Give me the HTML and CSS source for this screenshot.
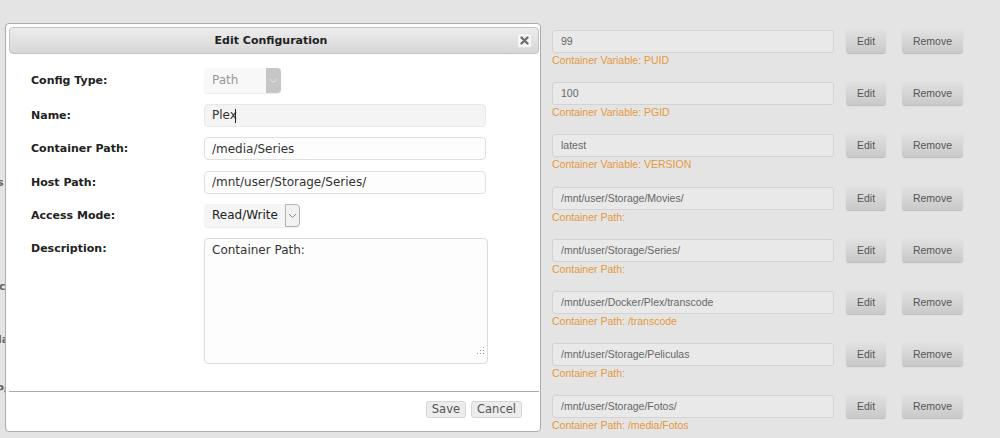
FILE: index.html
```html
<!DOCTYPE html>
<html lang="en">
<head>
    <meta charset="UTF-8">
    <meta name="viewport" content="width=device-width, initial-scale=1.0">
    <title>Edit Configuration</title>
    <link rel="stylesheet" href="styles.css">
</head>
<body>
    <!-- Page behind the dialog -->
    <div class="page">
        <div class="side">
            <span class="side-label side-s">s</span>
            <span class="side-label side-c">c</span>
            <span class="side-label side-la">la</span>
            <span class="side-label side-pa">Pa</span>
        </div>

        <div class="config-list">
            <div class="cfg-row">
                <div class="cfg-field">
                    <div class="cfg-value">99</div>
                    <div class="cfg-caption">Container Variable: PUID</div>
                </div>
                <button class="cfg-btn cfg-edit">Edit</button>
                <button class="cfg-btn cfg-remove">Remove</button>
            </div>
            <div class="cfg-row">
                <div class="cfg-field">
                    <div class="cfg-value">100</div>
                    <div class="cfg-caption">Container Variable: PGID</div>
                </div>
                <button class="cfg-btn cfg-edit">Edit</button>
                <button class="cfg-btn cfg-remove">Remove</button>
            </div>
            <div class="cfg-row">
                <div class="cfg-field">
                    <div class="cfg-value">latest</div>
                    <div class="cfg-caption">Container Variable: VERSION</div>
                </div>
                <button class="cfg-btn cfg-edit">Edit</button>
                <button class="cfg-btn cfg-remove">Remove</button>
            </div>
            <div class="cfg-row">
                <div class="cfg-field">
                    <div class="cfg-value">/mnt/user/Storage/Movies/</div>
                    <div class="cfg-caption">Container Path:</div>
                </div>
                <button class="cfg-btn cfg-edit">Edit</button>
                <button class="cfg-btn cfg-remove">Remove</button>
            </div>
            <div class="cfg-row">
                <div class="cfg-field">
                    <div class="cfg-value">/mnt/user/Storage/Series/</div>
                    <div class="cfg-caption">Container Path:</div>
                </div>
                <button class="cfg-btn cfg-edit">Edit</button>
                <button class="cfg-btn cfg-remove">Remove</button>
            </div>
            <div class="cfg-row">
                <div class="cfg-field">
                    <div class="cfg-value">/mnt/user/Docker/Plex/transcode</div>
                    <div class="cfg-caption">Container Path: /transcode</div>
                </div>
                <button class="cfg-btn cfg-edit">Edit</button>
                <button class="cfg-btn cfg-remove">Remove</button>
            </div>
            <div class="cfg-row">
                <div class="cfg-field">
                    <div class="cfg-value">/mnt/user/Storage/Peliculas</div>
                    <div class="cfg-caption">Container Path:</div>
                </div>
                <button class="cfg-btn cfg-edit">Edit</button>
                <button class="cfg-btn cfg-remove">Remove</button>
            </div>
            <div class="cfg-row">
                <div class="cfg-field">
                    <div class="cfg-value">/mnt/user/Storage/Fotos/</div>
                    <div class="cfg-caption">Container Path: /media/Fotos</div>
                </div>
                <button class="cfg-btn cfg-edit">Edit</button>
                <button class="cfg-btn cfg-remove">Remove</button>
            </div>
        </div>
    </div>

    <!-- Edit Configuration dialog -->
    <div class="dialog">
        <div class="dialog-title">
            <span></span>
            <span class="dialog-title-text">Edit Configuration</span>
            <span class="dialog-close">
                <svg width="9" height="9" viewBox="0 0 9 9">
                    <path d="M1.5 1.5 L7.5 7.5 M7.5 1.5 L1.5 7.5" stroke="#6e6e6e" stroke-width="2.4" stroke-linecap="round"/>
                </svg>
            </span>
        </div>

        <div class="dialog-body">
            <label class="form-label">Config Type:</label>
            <div class="select select-disabled">
                <span class="select-value">Path</span>
                <span class="select-arrow">
                    <svg width="9" height="6" viewBox="0 0 9 6"><path d="M1 1 L4.5 4.5 L8 1" fill="none" stroke="#e4e4e4" stroke-width="1"/></svg>
                </span>
            </div>

            <label class="form-label">Name:</label>
            <div class="caret-wrap">
                <input type="text" class="form-input form-input-muted" value="Plex">
            </div>

            <label class="form-label">Container Path:</label>
            <input type="text" class="form-input" value="/media/Series">

            <label class="form-label">Host Path:</label>
            <input type="text" class="form-input" value="/mnt/user/Storage/Series/">

            <label class="form-label">Access Mode:</label>
            <div class="select select-access">
                <span class="select-value">Read/Write</span>
                <span class="select-arrow">
                    <svg width="9" height="6" viewBox="0 0 9 6"><path d="M1 1 L4.5 4.5 L8 1" fill="none" stroke="#888" stroke-width="1"/></svg>
                </span>
            </div>

            <label class="form-label form-label-top">Description:</label>
            <div class="textarea-wrap">
                <textarea class="form-textarea">Container Path:</textarea>
            </div>
        </div>

        <div class="dialog-footer">
            <button class="dialog-btn">Save</button>
            <button class="dialog-btn">Cancel</button>
        </div>
    </div>
</body>
</html>
```

FILE: styles.css
```css
/* General Styling */
body, html {
    margin: 0;
    height: 100%;
    overflow: hidden;
    background-color: #e4e4e4;
}
.page {
    display: grid;
    grid-template-columns: 552px 1fr;
    height: 438px;
}

/* Labels of the page, mostly hidden by the dialog */
.side {
    display: flex;
    flex-direction: column;
    align-items: flex-start;
    font: bold 11px "DejaVu Sans", sans-serif;
    color: #666;
    line-height: 14px;
    overflow: hidden;
}
.side-label {
    white-space: nowrap;
}
.side-s { margin: 176px 0 0 -3px; }
.side-c { margin: 90px 0 0 -1px; }
.side-la { margin: 39px 0 0 -2px; }
.side-pa { margin: 36px 0 0 -4px; }

/* Right column of configs */
.config-list {
    padding-top: 30px;
    font-family: "Liberation Sans", Arial, sans-serif;
    font-size: 10.5px;
}
.cfg-row {
    display: flex;
    align-items: flex-start;
    margin-bottom: 15.2px;
}
.cfg-field {
    width: 282px;
}
.cfg-value {
    box-sizing: border-box;
    height: 23px;
    line-height: 21px;
    padding-left: 8px;
    border: 1px solid #d3d3d3;
    border-radius: 3px;
    background-color: #e9e9e9;
    color: #666;
    white-space: nowrap;
}
.cfg-caption {
    line-height: 14px;
    color: #e5993b;
}
.cfg-btn {
    margin-top: -1px;
    height: 24px;
    padding: 0;
    border: none;
    border-radius: 3px;
    background: linear-gradient(#e2e2e2, #c9c9c9);
    box-shadow: 0 1px 1px rgba(0, 0, 0, 0.18);
    color: #555;
    font-family: "Liberation Sans", Arial, sans-serif;
    font-size: 10.5px;
    cursor: pointer;
}
.cfg-edit {
    width: 40px;
    margin-left: 12px;
}
.cfg-remove {
    width: 61px;
    margin-left: 16px;
}

/* Dialog */
.dialog {
    position: absolute;
    left: 5px;
    top: 23px;
    box-sizing: border-box;
    width: 536px;
    height: 409px;
    padding: 3px 1px 0 3px;
    border: 1px solid #ababab;
    border-radius: 4px;
    background-color: white;
    display: flex;
    flex-direction: column;
    font-family: "DejaVu Sans", Verdana, sans-serif;
}
.dialog-title {
    box-sizing: border-box;
    height: 27px;
    display: grid;
    grid-template-columns: 1fr auto 1fr;
    align-items: center;
    padding-right: 6px;
    border: 1px solid #c2c2c2;
    border-radius: 4px;
    background: linear-gradient(#ededed, #d7d7d7);
}
.dialog-title-text {
    font-size: 11px;
    font-weight: bold;
    color: #222;
}
.dialog-close {
    justify-self: end;
    box-sizing: border-box;
    width: 15px;
    height: 15px;
    display: flex;
    align-items: center;
    justify-content: center;
    border: 1px solid #e2e2e2;
    border-radius: 2px;
    background-color: #f6f6f6;
}
.dialog-body {
    flex: 1;
    display: grid;
    grid-template-columns: 173px 284px;
    grid-auto-rows: min-content;
    align-items: center;
    row-gap: 10.5px;
    padding: 14px 0 0 22px;
}
.form-label {
    font-size: 11px;
    font-weight: bold;
    color: #222;
}
.form-label-top {
    align-self: start;
    padding-top: 4px;
}
.form-input {
    box-sizing: border-box;
    width: 282px;
    height: 23px;
    margin: 0;
    padding: 0 0 0 7px;
    border: 1px solid #e0e0e0;
    border-radius: 4px;
    background-color: #fdfdfd;
    color: #333;
    font-family: "DejaVu Sans", Verdana, sans-serif;
    font-size: 12px;
    outline: none;
}
.form-input-muted {
    background-color: #f4f4f4;
    border-color: #e8e8e8;
}
.caret-wrap {
    position: relative;
}
.caret-wrap::after {
    content: "";
    position: absolute;
    left: 31px;
    top: 5px;
    width: 1px;
    height: 14px;
    background-color: #222;
}
.textarea-wrap {
    position: relative;
    height: 126px;
}
.textarea-wrap::after {
    content: "";
    position: absolute;
    right: 10px;
    bottom: 10px;
    width: 1px;
    height: 1px;
    background-color: #999;
    box-shadow: 3px 0 #999, 6px 0 #999, 3px -3px #999, 6px -3px #999, 6px -6px #999;
}
.form-textarea {
    box-sizing: border-box;
    width: 284px;
    height: 126px;
    margin: 0;
    padding: 4px 7px;
    border: 1px solid #dcdcdc;
    border-radius: 4px;
    background-color: #fdfdfd;
    color: #333;
    font-family: "DejaVu Sans", Verdana, sans-serif;
    font-size: 12px;
    resize: none;
    outline: none;
}

/* Custom selects */
.select {
    display: flex;
    box-sizing: border-box;
    border-radius: 4px;
    font-size: 12px;
    box-shadow: 0 1px 1px rgba(0, 0, 0, 0.08);
}
.select-value {
    flex: 1;
    padding-left: 8px;
}
.select-arrow {
    width: 15px;
    display: flex;
    align-items: center;
    justify-content: center;
    border-radius: 0 4px 4px 0;
}
.select-disabled {
    width: 77px;
    height: 25px;
    line-height: 25px;
    background-color: #f8f8f8;
    color: #999;
}
.select-disabled .select-arrow {
    background-color: #c6c6c6;
}
.select-access {
    width: 96px;
    height: 23px;
    line-height: 23px;
    background-color: #f5f5f5;
    color: #222;
}
.select-access .select-arrow {
    box-sizing: border-box;
    border: 1px solid #b4b4b4;
    background-color: #f2f2f2;
}

/* Dialog footer */
.dialog-footer {
    box-sizing: border-box;
    height: 40px;
    display: flex;
    justify-content: flex-end;
    align-items: flex-start;
    gap: 5px;
    padding: 9px 17px 0 0;
    border-top: 1px solid #aaa;
}
.dialog-btn {
    height: 17px;
    padding: 0 5px;
    border: 1px solid #d6d6d6;
    border-radius: 3px;
    background-color: #ececec;
    color: #555;
    font-family: "DejaVu Sans", Verdana, sans-serif;
    font-size: 11.5px;
    line-height: 15px;
    cursor: pointer;
}
```
